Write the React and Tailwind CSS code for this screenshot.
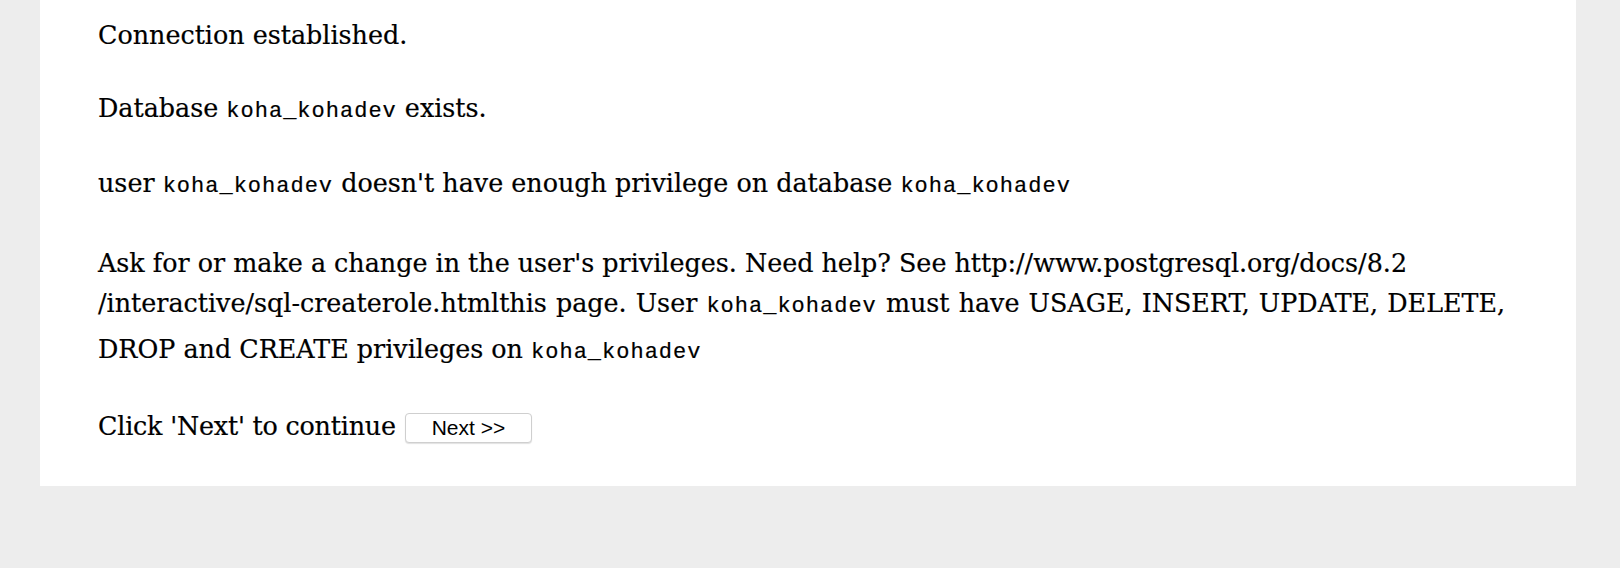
import React from "react";

const Code = ({ children }) => (
  <code className="font-['Liberation_Mono',monospace] text-[22px] leading-none tracking-[1px]">
    {children}
  </code>
);

export default function App() {
  return (
    <div className="min-h-[568px] w-full bg-[#ededed] font-['DejaVu_Serif',serif] text-[25.4px] text-black [-webkit-text-stroke:0.2px]">
      <div className="ml-[40px] w-[1536px] bg-white pl-[58px] pt-[15px] pb-[40px]">
        <div className="h-[40px] whitespace-nowrap leading-[40px]">Connection established.</div>
        <div className="mt-[33px] h-[40px] whitespace-nowrap leading-[40px]">
          Database <Code>koha_kohadev</Code> exists.
        </div>
        <div className="mt-[35px] h-[40px] whitespace-nowrap leading-[40px]">
          user <Code>koha_kohadev</Code> doesn't have enough privilege on database <Code>koha_kohadev</Code>
        </div>
        <div className="mt-[40px]">
          <div className="h-[40px] whitespace-nowrap leading-[40px]">
            Ask for or make a change in the user's privileges. Need help? See http://www.postgresql.org/docs/8.2
          </div>
          <div className="h-[40px] whitespace-nowrap leading-[40px] [word-spacing:1px]">
            /interactive/sql-createrole.htmlthis page. User <Code>koha_kohadev</Code> must have USAGE, INSERT, UPDATE, DELETE,
          </div>
          <div className="mt-[6px] h-[40px] whitespace-nowrap leading-[40px]">
            DROP and CREATE privileges on <Code>koha_kohadev</Code>
          </div>
        </div>
        <div className="mt-[37px] h-[40px] whitespace-nowrap leading-[40px]">
          <span className="tracking-[-0.2px]">Click 'Next' to continue</span>{" "}
          <button
            type="button"
            className="ml-[1px] inline-block h-[30px] w-[127px] rounded-[4px] border border-[#cfcfcf] bg-white px-0 font-['Liberation_Sans',Arial,sans-serif] text-[21px] leading-[28px] text-black shadow-[0_1px_1px_rgba(0,0,0,0.12)] align-baseline [-webkit-text-stroke:0px]"
          >
            Next &gt;&gt;
          </button>
        </div>
      </div>
    </div>
  );
}
